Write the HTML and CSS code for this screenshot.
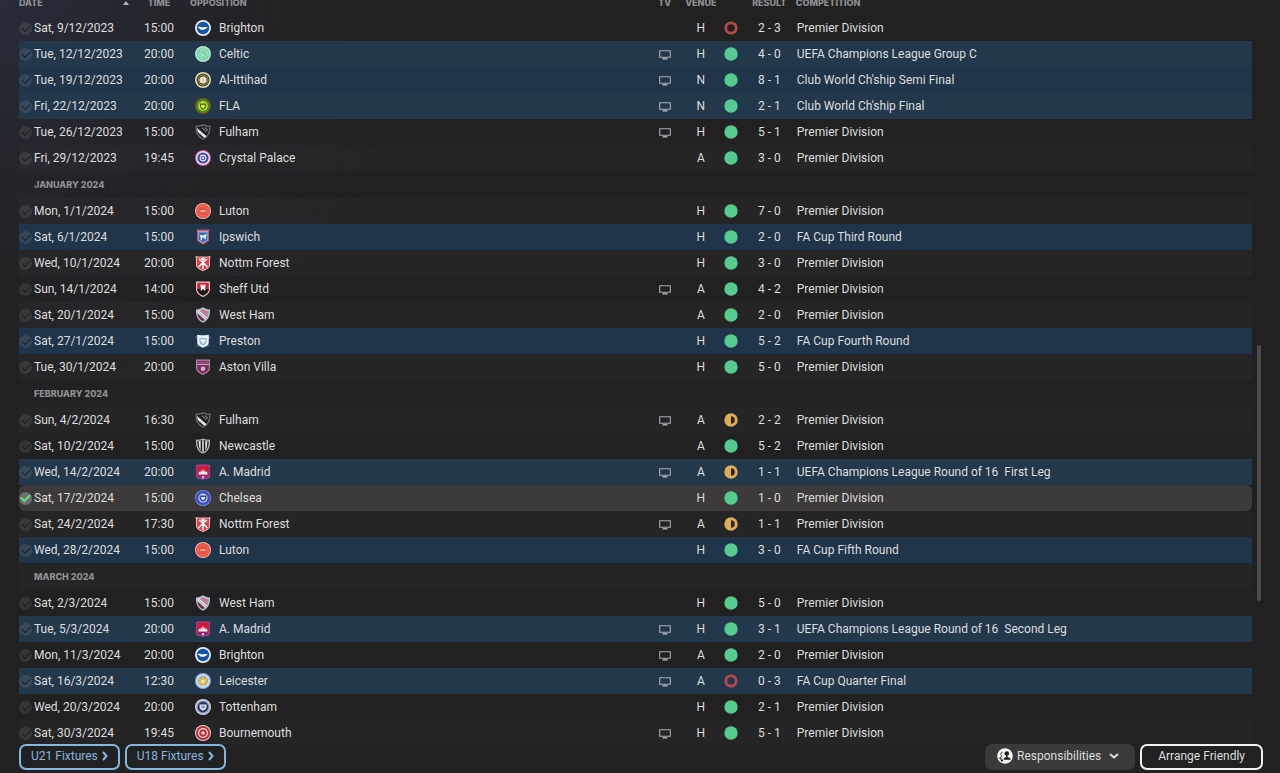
FILE: index.html
```html
<!DOCTYPE html>
<html lang="en">
<head>
  <meta charset="UTF-8" />
  <meta name="viewport" content="width=device-width, initial-scale=1.0"/>
  <title>Fixtures</title>
  <link rel="stylesheet" href="styles.css">
</head>
<body>

  <!-- ICONS -->
  <svg class="icon-defs" aria-hidden="true">
    <symbol id="tv" viewBox="0 0 12 10">
      <path d="M.7.7h10.6v6.6H.7z" fill="none" stroke="currentColor" stroke-width="1.1"/>
      <path d="M4 8h4l1 1.6H3z" fill="currentColor"/>
    </symbol>
    <symbol id="win" viewBox="0 0 14 14">
      <circle cx="7" cy="7" r="6.7" fill="#56cb90"/>
    </symbol>
    <symbol id="draw" viewBox="0 0 14 14">
      <circle cx="7" cy="7" r="6.7" fill="#e0ac54"/>
      <path d="M7 3.2a3.8 3.8 0 0 1 0 7.6z" fill="#2b2415"/>
    </symbol>
    <symbol id="loss" viewBox="0 0 14 14">
      <circle cx="7" cy="7" r="5.200" fill="none" stroke="#b8484c" stroke-width="2.800"/>
    </symbol>

    <!-- club crests -->
    <symbol id="brighton" viewBox="0 0 16 16">
      <circle cx="8" cy="8" r="8" fill="#e4eefa"/>
      <circle cx="8" cy="8" r="6.2" fill="#1453a3"/>
      <path d="M2.5 7.2c2-.8 3.300 0 4.500.4 2-.9 4.500-.7 6.500.2-1.500 0-2.500.6-3.500 1.500-2 .8-4.500.8-5.500-.9z" fill="#fff"/>
    </symbol>
    <symbol id="celtic" viewBox="0 0 16 16">
      <circle cx="8" cy="8" r="8" fill="#b5ecd0"/>
      <circle cx="8" cy="8" r="6.600" fill="#7fd6ab"/>
      <path d="M8 8c-4-1-3-5-.5-4 .5-1.500 4-1 2.500 1.500 3-1 3.500 2 1.500 2.800C13 11 9.500 12.500 8 8zm0 0c-1 3-4.500 3-4 .5M8 8l-1.500 4.500" fill="none" stroke="#a8e6c6" stroke-width="1"/>
    </symbol>
    <symbol id="ittihad" viewBox="0 0 16 16">
      <circle cx="8" cy="8" r="8" fill="#e6e2b0"/>
      <circle cx="8" cy="8" r="6.500" fill="#3d3a22"/>
      <circle cx="8" cy="8" r="5" fill="none" stroke="#a39b5a" stroke-width="1"/>
      <circle cx="8" cy="8" r="3.600" fill="#e8e5d8"/>
      <circle cx="8" cy="8" r="1.500" fill="#cfccbc"/>
    </symbol>
    <symbol id="fla" viewBox="0 0 16 16">
      <circle cx="8" cy="8" r="8" fill="#8a4a1c"/>
      <circle cx="8" cy="8" r="7" fill="#3f8f22"/>
      <circle cx="8" cy="8" r="4.800" fill="#d8d626"/>
      <path d="M4.800 5.500h6.400v2.500c0 2-1.500 3.200-3.200 4-1.700-.8-3.200-2-3.200-4z" fill="#3c7d1c"/>
      <path d="M6 7h4v1.300c0 1-1 1.700-2 2.200-1-.5-2-1.200-2-2.200z" fill="#dfe02c"/>
    </symbol>
    <symbol id="fulham" viewBox="0 0 16 16">
      <path d="M.5 1.500C3 1.700 6 1 8 .3c2 .7 5 1.400 7.500 1.200.3 6-1 11.500-7.500 14.200C1.500 13 .2 7.500.5 1.500z" fill="#66686b"/>
      <path d="M2 3c2.500 0 4.500-.6 6-1.200 1.500.6 3.500 1.200 6 1.200.1 5-1.500 9-6 11.200C3.500 12 1.900 8 2 3z" fill="#1d1d1f"/>
      <path d="M2 3.800l9.500 8.500-2 1.600L2.800 8z" fill="#ececec"/>
      <path d="M7 3.500h1.500V5H7zm3 0h1.500V5H10zm-1.500 1.500H10v1.500H8.500zm3 0H13v1.500h-1.500zM10 6.500h1.500V8H10z" fill="#86888b"/>
    </symbol>
    <symbol id="palace" viewBox="0 0 16 16">
      <circle cx="8" cy="8" r="8" fill="#c2559c"/>
      <circle cx="8" cy="8" r="7" fill="#f3ebf6"/>
      <circle cx="8" cy="8" r="5.600" fill="#3b4aa6"/>
      <circle cx="8" cy="8" r="3.400" fill="#e9e6f6"/>
      <circle cx="8" cy="8" r="2.300" fill="#5560b4"/>
      <circle cx="8" cy="8" r="1" fill="#fff"/>
    </symbol>
    <symbol id="luton" viewBox="0 0 16 16">
      <circle cx="8" cy="8" r="8" fill="#f5b9ae"/>
      <circle cx="8" cy="8" r="7" fill="#e8503f"/>
      <circle cx="8" cy="8" r="5" fill="none" stroke="#ef7365" stroke-width="1"/>
      <path d="M5.500 7l1.200.6L8 6.800l1.300.8 1.200-.6v2h-5z" fill="#f7b5a8"/>
    </symbol>
    <symbol id="ipswich" viewBox="0 0 16 16">
      <path d="M1 .5h14l-1 2v9.300L8 15.800l-6-4V2.500z" fill="#c0566e"/>
      <path d="M3 2h10v9.300L8 14.200l-5-2.900z" fill="#b9a3c9"/>
      <path d="M3.700 3.500h8.600v7.300L8 13.200l-4.300-2.400z" fill="#2c6fb5"/>
      <path d="M4 5.200l2 1h3l2-1.200 1 1.200-1.200 1v3H9.500V8.700H7v2.500H5.600V8z" fill="#f4f6fb"/>
    </symbol>
    <symbol id="forest" viewBox="0 0 16 16">
      <path d="M.5 1L3 1.500h10L15.500 1 15 4v6c0 3-3.500 4.700-7 6-3.500-1.300-7-3-7-6V4z" fill="#f4b6b6"/>
      <path d="M2 2.500h12V10c0 2.500-3 3.800-6 4.800C5 13.800 2 12.500 2 10z" fill="#d9434a"/>
      <path d="M8 2.500v11.500M4 4l4 3.500L12 4M3.500 12L8 7.500l4.500 4.500M6 3.500l2 1.500 2-1.500" fill="none" stroke="#fff" stroke-width="1.300"/>
    </symbol>
    <symbol id="sheff" viewBox="0 0 16 16">
      <path d="M1 .5h14V8c0 4-3.500 6.500-7 8-3.500-1.500-7-4-7-8z" fill="#eec6c8"/>
      <path d="M2.200 1.700h11.600V8c0 3.200-2.900 5.300-5.800 6.600C5.100 13.300 2.200 11.200 2.200 8z" fill="#c22a35"/>
      <path d="M2.200 8h11.600c-.3 3.500-3 5.500-5.800 6.600C5.200 13.500 2.500 11.500 2.200 8z" fill="#1c1315"/>
      <path d="M5.500 3.500h1v1h.8v-1h1.400v1h.8v-1h1V6l-.6.500.6 3H9.300L8 7.800 6.700 9.500H5.500l.6-3-.6-.5z" fill="#fff"/>
    </symbol>
    <symbol id="westham" viewBox="0 0 16 16">
      <path d="M1 2.500C4 2.500 6 1.500 8 .3c2 1.200 4 2.200 7 2.200.3 6-1.500 10.700-7 13.300C2.500 13.200.7 8.500 1 2.500z" fill="#b4c3d6"/>
      <path d="M2.500 4c2.500-.1 4-.9 5.500-1.800 1.500.9 3 1.700 5.500 1.800 0 4.700-1.500 8-5.500 10.200C4 12 2.500 8.700 2.500 4z" fill="#bb8190"/>
      <path d="M2.500 6.500l7 6.500L8 14.200C4.500 12.300 2.700 10 2.500 6.500z" fill="#6f2b45"/>
      <path d="M2.500 4l2-.2 7.500 7-1.800 2L2.600 6z" fill="#e4eaf2"/>
      <path d="M3.600 5l7.300 6.900" stroke="#6c8fb5" stroke-width=".8"/>
    </symbol>
    <symbol id="preston" viewBox="0 0 18 16">
      <path d="M0 3l3-1.500V5L1 6zM18 3l-3-1.500V5l2 1zM0 14l4-3 1 3.500zM18 14l-4-3-1 3.500z" fill="#3e5c80"/>
      <path d="M2.500 1l3.500.5h6l3.500-.5V9.500c0 3.500-3.500 5-6.500 6-3-1-6.500-2.500-6.500-6z" fill="#eef4fa"/>
      <path d="M5 4.500h8V9c0 2-2 3.200-4 4-2-.8-4-2-4-4z" fill="#8fb9dc"/>
      <path d="M6 6h3l2 1 1-1v2l-2 1v2H8.500V9H7z" fill="#fff"/>
    </symbol>
    <symbol id="villa" viewBox="0 0 16 16">
      <path d="M1 .5h14V9c0 3.500-3.500 5.500-7 7-3.500-1.500-7-3.500-7-7z" fill="#b083a6"/>
      <path d="M2.200 1.700h11.600V9c0 2.700-2.900 4.400-5.800 5.700C5.100 13.400 2.200 11.700 2.200 9z" fill="#74305a"/>
      <path d="M2.200 4.700h11.600v1.300H2.200z" fill="#c79dbb"/>
      <path d="M4 2.500v1.500m2-1.500v1.500m2-1.500v1.500m2-1.500v1.500m2-1.500v1.500" stroke="#b083a6" stroke-width=".8"/>
      <circle cx="8" cy="9.800" r="2.300" fill="#d3b3cb"/>
    </symbol>
    <symbol id="newcastle" viewBox="0 0 16 16">
      <path d="M1 1.500C4 2 6 1.300 8 .5c2 .8 4 1.500 7 1 .3 6-.5 11.500-7 14.300C1.500 13 .7 7.500 1 1.500z" fill="#b5b5b5"/>
      <path d="M2.400 3c2.200 0 4-.6 5.600-1.200 1.600.6 3.400 1.200 5.600 1.200.1 5-1 9.200-5.600 11.400C3.400 12.200 2.300 8 2.400 3z" fill="#1a1a1a"/>
      <path d="M3.700 3l2-.4v10C4.200 11 3.600 7 3.700 3zm8.600 0l-2-.4v10c1.500-1.600 2.100-5.600 2-9.600zM7.200 2.200h1.600v11.600H7.200z" fill="#e2e2e2"/>
    </symbol>
    <symbol id="madrid" viewBox="0 0 16 16">
      <path d="M.5 2L2.500.5h11L15.500 2 14.600 4l.6 8.500-2 2.500H10l-2 1-2-1H2.800l-2-2.500L1.400 4z" fill="#9c4c9a"/>
      <path d="M1.600 2.500L3 1.500h10l1.400 1-.6 2 .4 7.500-1.300 1.800H3.100L1.800 12l.4-7.500z" fill="#d3173f"/>
      <path d="M3 11.500h10L12 14H4z" fill="#7b2c86"/>
      <path d="M3.500 10.500L4 7.500l1.800 1.300V6.500L7 7v1.500L8 4.500l1 4V7l1.200-.5v2.300L12 7.500l.5 3z" fill="#fff"/>
      <circle cx="8" cy="13" r="1" fill="#fff"/>
    </symbol>
    <symbol id="chelsea" viewBox="0 0 16 16">
      <circle cx="8" cy="8" r="8" fill="#7f8fe0"/>
      <circle cx="8" cy="8" r="7.200" fill="#3d4fc0"/>
      <circle cx="8" cy="8" r="4.600" fill="#c9d2f6"/>
      <path d="M4.600 5.400h6.800v2.800c0 1.800-1.800 2.900-3.400 3.600-1.600-.7-3.400-1.800-3.400-3.600z" fill="#3546ab"/>
      <path d="M6 7h4v1.500L8 10.200 6 8.500z" fill="#e8ecff"/>
    </symbol>
    <symbol id="leicester" viewBox="0 0 16 16">
      <circle cx="8" cy="8" r="8" fill="#8ea9d8"/>
      <circle cx="8" cy="8" r="6.800" fill="#d5e0f2"/>
      <circle cx="8" cy="8" r="5" fill="#7f9bcb"/>
      <path d="M8 2.500l1.400 3 3.300-.6-1.200 3.100 2.200 2.200-3.400.5L8 13.500l-2.300-2.800-3.400-.5L4.500 8 3.300 4.900l3.300.6z" fill="#e6c04a"/>
      <circle cx="8" cy="8.300" r="1.300" fill="#fbf6dd"/>
    </symbol>
    <symbol id="tottenham" viewBox="0 0 16 16">
      <circle cx="8" cy="8" r="8" fill="#d3d9ea"/>
      <circle cx="8" cy="8" r="6.600" fill="#8b96ba"/>
      <circle cx="8" cy="8" r="5.300" fill="#2a3760"/>
      <path d="M4.500 5.500h7V8c0 1.800-1.700 3-3.500 3.800C6.200 11 4.500 9.800 4.500 8z" fill="#d9dff0"/>
      <path d="M6 6.700h4V8L8 9.800 6 8z" fill="#8b96ba"/>
    </symbol>
    <symbol id="bournemouth" viewBox="0 0 16 16">
      <circle cx="8" cy="8" r="8" fill="#ecd2d2"/>
      <circle cx="8" cy="8" r="7" fill="#b82f37"/>
      <circle cx="8" cy="8" r="4.900" fill="#f4e9e9"/>
      <circle cx="8" cy="8" r="3.800" fill="#b82f37"/>
      <circle cx="8" cy="8" r="1.700" fill="#f2d7d7"/>
    </symbol>
  </svg>

  <main class="fixtures">
    <table class="fixture-table">
      <thead>
        <tr>
          <th class="col-date">Date <span class="sort-arrow"></span></th>
          <th class="col-time">Time</th>
          <th class="col-crest" colspan="2">Opposition</th>
          <th class="col-tv">TV</th>
          <th class="col-venue">Venue</th>
          <th class="col-outcome"></th>
          <th class="col-result">Result</th>
          <th class="col-competition">Competition</th>
        </tr>
      </thead>
      <tbody id="fixture-rows"></tbody>
    </table>
    <div class="scrollbar">
      <div class="scroll-thumb"></div>
    </div>
  </main>

  <footer class="bottom-bar">
    <button class="btn btn-blue">U21 Fixtures
      <svg width="6" height="10" viewBox="0 0 6 10"><path d="M1 1l3.500 4L1 9" fill="none" stroke="currentColor" stroke-width="2"/></svg>
    </button>
    <button class="btn btn-blue">U18 Fixtures
      <svg width="6" height="10" viewBox="0 0 6 10"><path d="M1 1l3.500 4L1 9" fill="none" stroke="currentColor" stroke-width="2"/></svg>
    </button>
    <button class="btn btn-grey">
      <svg width="16" height="16" viewBox="0 0 16 16">
        <circle cx="8" cy="8" r="7.800" fill="#f5f3ee"/>
        <circle cx="9.800" cy="5.500" r="2.300" fill="#1d1d1d"/>
        <path d="M9 7.500h1.600v1.700c2 .2 3 1 3.200 2.600H6.500c.2-1.600 1-2.400 2.500-2.600z" fill="#1d1d1d"/>
        <path d="M5.500 4.200a1.800 1.800 0 0 0-1 3.200v1.400c-1 .2-1.700.8-1.900 1.800h2.200" fill="none" stroke="#1d1d1d" stroke-width=".9"/>
        <path d="M3 11.500h3v2H4.500z" fill="#1d1d1d"/>
      </svg>
      Responsibilities
      <svg class="chevron" width="10" height="6" viewBox="0 0 10 6"><path d="M1 1l4 3.500L9 1" fill="none" stroke="currentColor" stroke-width="2"/></svg>
    </button>
    <button class="btn btn-white">Arrange Friendly</button>
  </footer>

  <script src="script.js"></script>
</body>
</html>
```
FILE: styles.css
```css
* {
  box-sizing: border-box;
  margin: 0;
  padding: 0;
}

body {
  font-family: Roboto, 'Liberation Sans', sans-serif;
  font-size: 12px;
  color: #dededd;
  background: radial-gradient(circle at 0 0, #282c38 0, #232327 220px, #212122 420px);
  display: flex;
  flex-direction: column;
  height: 100vh;
  overflow: hidden;
}

.icon-defs {
  display: none;
}

/* FIXTURE LIST */
.fixtures {
  flex: 1;
  min-height: 0;
  overflow: hidden;
  display: flex;
  gap: 5px;
  padding: 0 19px;
}

/* list is scrolled slightly past its header */
.fixture-table {
  flex: 1;
  align-self: flex-start;
  margin-top: -9px;
  table-layout: fixed;
  border-collapse: collapse;
}

.fixture-table th {
  height: 24px;
  font-family: Inter, sans-serif;
  font-size: 9px;
  font-weight: 800;
  color: #8f9093;
  text-align: left;
  text-transform: uppercase;
  white-space: nowrap;
}

.fixture-table thead th {
  padding-bottom: 2px;
}

.fixture-table td {
  height: 26px;
  white-space: nowrap;
  vertical-align: middle;
}

.col-date { width: 115px; }
.col-time { width: 50px; }
.col-tv { width: 36px; }
.col-venue { width: 36px; }
.col-outcome { width: 24px; }
.col-result { width: 53px; }
.col-competition { width: 37%; }

.fixture-table .col-time,
.fixture-table .col-tv,
.fixture-table .col-venue,
.fixture-table .col-outcome,
.fixture-table .col-result {
  text-align: center;
}

.fixture-table th.col-crest {
  padding-left: 6px;
}

.sort-arrow {
  float: right;
  margin: 4px 5px 0 0;
  border: 3px solid transparent;
  border-top: none;
  border-bottom: 4px solid #b5b5b5;
}

td svg {
  display: inline-block;
  vertical-align: middle;
}

.opposition {
  display: flex;
  align-items: center;
  gap: 8px;
  padding-left: 11px;
}

td.col-competition {
  padding-left: 1px;
}

.date-cell {
  display: flex;
  align-items: center;
  gap: 2px;
}

.pick {
  appearance: none;
  width: 13px;
  height: 13px;
  border-radius: 50%;
  background-color: rgba(255, 255, 255, 0.09);
  color: #1d1e20;
  display: grid;
  place-items: center;
  cursor: pointer;
}

.pick::after {
  content: "";
  width: 7px;
  height: 4px;
  margin-top: -2px;
  border-left: 1px solid currentColor;
  border-bottom: 1px solid currentColor;
  transform: rotate(-45deg);
}

.pick:checked {
  background-color: #6e6e6e;
  color: #5fe37c;
}

.pick:checked::after {
  border-width: 0 0 2px 2px;
}

.tv-icon {
  width: 12px;
  height: 10px;
  color: #a9adb2;
}

.outcome-icon {
  width: 14px;
  height: 14px;
}

.crest {
  width: 16px;
  height: 16px;
}

.odd {
  background-color: rgba(255, 255, 255, 0.02);
}

.cup {
  background-color: #20344a;
}

.cup.odd {
  background-color: #24384c;
}

.selected td {
  background-color: #3c3a3a;
}

.selected td:first-child {
  border-radius: 6px 0 0 6px;
}

.selected td:last-child {
  border-radius: 0 6px 6px 0;
}

.fixture-table .month th {
  height: 27px;
  padding-left: 15px;
}

/* SCROLLBAR */
.scrollbar {
  width: 4px;
  display: grid;
  grid-template-rows: 464fr 344fr 192fr;
}

.scroll-thumb {
  grid-row: 2;
  background-color: #4b4b4c;
  border-radius: 2px;
}

/* BOTTOM BAR */
.bottom-bar {
  display: flex;
  gap: 5px;
  padding: 0 17px 3px 19px;
}

.btn {
  display: flex;
  align-items: center;
  justify-content: center;
  gap: 4px;
  height: 26px;
  padding: 0 10px 2px;
  border: 2px solid transparent;
  border-radius: 7px;
  background: none;
  font-family: inherit;
  font-size: 12px;
  color: #dededd;
  cursor: pointer;
}

.btn-blue {
  border-color: #85b6de;
  color: #85b6de;
}

.btn-grey {
  margin-left: auto;
  padding-right: 14px;
  background-color: #3b3a3a;
}

.chevron {
  margin-left: 4px;
}

.btn-white {
  padding: 0 16px 2px;
  border-color: #f1f0ec;
}

.btn:hover {
  background-color: #444;
}
```
FILE: script.js
```js
// date, time, club, crest, on tv, venue, outcome, score, competition
const fixtures = [
  ['Sat, 9/12/2023', '15:00', 'Brighton', 'brighton', 0, 'H', 'loss', '2 - 3', 'Premier Division'],
  ['Tue, 12/12/2023', '20:00', 'Celtic', 'celtic', 1, 'H', 'win', '4 - 0', 'UEFA Champions League Group C'],
  ['Tue, 19/12/2023', '20:00', 'Al-Ittihad', 'ittihad', 1, 'N', 'win', '8 - 1', "Club World Ch'ship Semi Final"],
  ['Fri, 22/12/2023', '20:00', 'FLA', 'fla', 1, 'N', 'win', '2 - 1', "Club World Ch'ship Final"],
  ['Tue, 26/12/2023', '15:00', 'Fulham', 'fulham', 1, 'H', 'win', '5 - 1', 'Premier Division'],
  ['Fri, 29/12/2023', '19:45', 'Crystal Palace', 'palace', 0, 'A', 'win', '3 - 0', 'Premier Division'],
  'January 2024',
  ['Mon, 1/1/2024', '15:00', 'Luton', 'luton', 0, 'H', 'win', '7 - 0', 'Premier Division'],
  ['Sat, 6/1/2024', '15:00', 'Ipswich', 'ipswich', 0, 'H', 'win', '2 - 0', 'FA Cup Third Round'],
  ['Wed, 10/1/2024', '20:00', 'Nottm Forest', 'forest', 0, 'H', 'win', '3 - 0', 'Premier Division'],
  ['Sun, 14/1/2024', '14:00', 'Sheff Utd', 'sheff', 1, 'A', 'win', '4 - 2', 'Premier Division'],
  ['Sat, 20/1/2024', '15:00', 'West Ham', 'westham', 0, 'A', 'win', '2 - 0', 'Premier Division'],
  ['Sat, 27/1/2024', '15:00', 'Preston', 'preston', 0, 'H', 'win', '5 - 2', 'FA Cup Fourth Round'],
  ['Tue, 30/1/2024', '20:00', 'Aston Villa', 'villa', 0, 'H', 'win', '5 - 0', 'Premier Division'],
  'February 2024',
  ['Sun, 4/2/2024', '16:30', 'Fulham', 'fulham', 1, 'A', 'draw', '2 - 2', 'Premier Division'],
  ['Sat, 10/2/2024', '15:00', 'Newcastle', 'newcastle', 0, 'A', 'win', '5 - 2', 'Premier Division'],
  ['Wed, 14/2/2024', '20:00', 'A. Madrid', 'madrid', 1, 'A', 'draw', '1 - 1', 'UEFA Champions League Round of 16&nbsp; First Leg'],
  ['Sat, 17/2/2024', '15:00', 'Chelsea', 'chelsea', 0, 'H', 'win', '1 - 0', 'Premier Division'],
  ['Sat, 24/2/2024', '17:30', 'Nottm Forest', 'forest', 1, 'A', 'draw', '1 - 1', 'Premier Division'],
  ['Wed, 28/2/2024', '15:00', 'Luton', 'luton', 0, 'H', 'win', '3 - 0', 'FA Cup Fifth Round'],
  'March 2024',
  ['Sat, 2/3/2024', '15:00', 'West Ham', 'westham', 0, 'H', 'win', '5 - 0', 'Premier Division'],
  ['Tue, 5/3/2024', '20:00', 'A. Madrid', 'madrid', 1, 'H', 'win', '3 - 1', 'UEFA Champions League Round of 16&nbsp; Second Leg'],
  ['Mon, 11/3/2024', '20:00', 'Brighton', 'brighton', 1, 'A', 'win', '2 - 0', 'Premier Division'],
  ['Sat, 16/3/2024', '12:30', 'Leicester', 'leicester', 1, 'A', 'loss', '0 - 3', 'FA Cup Quarter Final'],
  ['Wed, 20/3/2024', '20:00', 'Tottenham', 'tottenham', 0, 'H', 'win', '2 - 1', 'Premier Division'],
  ['Sat, 30/3/2024', '19:45', 'Bournemouth', 'bournemouth', 1, 'H', 'win', '5 - 1', 'Premier Division']
];

const selectedDate = 'Sat, 17/2/2024';

function rowHtml(row, i) {
  const stripe = i % 2 ? 'odd' : '';
  if (typeof row === 'string') {
    return `<tr class="month ${stripe}"><th colspan="9">${row}</th></tr>`;
  }

  const [date, time, club, crest, tv, venue, outcome, score, competition] = row;
  const selected = date === selectedDate;
  const cup = competition !== 'Premier Division';

  return `<tr class="${stripe} ${cup ? 'cup' : ''} ${selected ? 'selected' : ''}">
    <td><label class="date-cell"><input class="pick" type="checkbox" ${selected ? 'checked' : ''}>${date}</label></td>
    <td class="col-time">${time}</td>
    <td colspan="2"><div class="opposition"><svg class="crest"><use href="#${crest}"/></svg>${club}</div></td>
    <td class="col-tv">${tv ? '<svg class="tv-icon"><use href="#tv"/></svg>' : ''}</td>
    <td class="col-venue">${venue}</td>
    <td class="col-outcome"><svg class="outcome-icon"><use href="#${outcome}"/></svg></td>
    <td class="col-result">${score}</td>
    <td class="col-competition">${competition}</td>
  </tr>`;
}

document.getElementById('fixture-rows').innerHTML = fixtures.map(rowHtml).join('');
```
